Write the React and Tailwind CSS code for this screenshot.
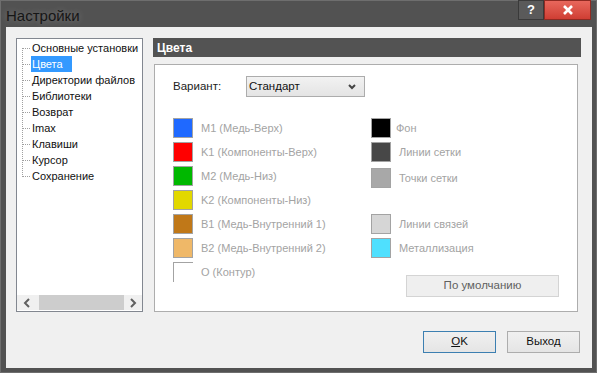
import React from 'react';

const leftColors = [
  { color: 'bg-[#1f69ff]', label: 'M1 (Медь-Верх)' },
  { color: 'bg-[#ff0000]', label: 'K1 (Компоненты-Верх)' },
  { color: 'bg-[#00b800]', label: 'M2 (Медь-Низ)' },
  { color: 'bg-[#e2d800]', label: 'K2 (Компоненты-Низ)' },
  { color: 'bg-[#c07818]', label: 'B1 (Медь-Внутренний 1)' },
  { color: 'bg-[#efb868]', label: 'B2 (Медь-Внутренний 2)' },
];

const treeItems = [
  'Основные установки',
  'Цвета',
  'Директории файлов',
  'Библиотеки',
  'Возврат',
  'Imax',
  'Клавиши',
  'Курсор',
  'Сохранение',
];

// dotted connector for one tree row
const Connector = ({ first, last }) => (
  <svg width="8" height="16" className="shrink-0">
    <line
      x1="0.5"
      x2="0.5"
      y1={first ? 8 : 0}
      y2={last ? 9 : 16}
      stroke="#a0a0a0"
      strokeDasharray="1 1"
    />
    <line x1="1" x2="8" y1="8.5" y2="8.5" stroke="#a0a0a0" strokeDasharray="1 1" />
  </svg>
);

const Swatch = ({ color, label, labelClass = 'ml-[8px]' }) => (
  <div className="flex items-center h-[24px]">
    <div className={`w-[20px] h-[20px] border border-[#a3a3a3] ${color}`} />
    <span className={`${labelClass} text-[#a3a3a3]`}>{label}</span>
  </div>
);

const Chevron = ({ dir }) => (
  <svg width="8" height="10" viewBox="0 0 8 10">
    <polyline
      points={dir === 'left' ? '6,1 2,5 6,9' : '2,1 6,5 2,9'}
      fill="none"
      stroke="#606060"
      strokeWidth="2"
    />
  </svg>
);

const App = () => {
  return (
    <div
      className="w-[597px] h-[373px] bg-[#525252] border border-[#6e6e6e] flex flex-col text-[11px] text-[#111]"
      style={{ fontFamily: '"Liberation Sans", Arial, sans-serif' }}
    >
      {/* Title bar */}
      <div className="h-[26px] flex items-start shrink-0">
        <div className="pl-[5px] pt-[4px] text-[15px] text-[#161616] [text-shadow:0_0_6px_rgba(255,255,255,0.25)]">
          Настройки
        </div>
        <div className="ml-auto mr-[5px] -mt-px flex">
          <div className="w-[26px] h-[20px] bg-[#5a5a5a] border border-[#3a3a3a] flex items-center justify-center text-white font-bold text-[13px]">
            ?
          </div>
          <div className="w-[47px] h-[20px] bg-gradient-to-b from-[#e8675c] to-[#cf3d33] border border-[#8e2a22] flex items-center justify-center">
            <svg width="12" height="10" viewBox="0 0 12 10">
              <path d="M2 1 L10 9 M10 1 L2 9" stroke="#fff" strokeWidth="2.6" />
            </svg>
          </div>
        </div>
      </div>

      {/* Client area */}
      <div className="flex-1 ml-[5px] mr-[4px] mb-[4px] bg-[#f0f0f0] flex flex-col pt-[11px]">
        <div className="flex pl-[10px] gap-[10px]">
          {/* Tree */}
          <div className="w-[127px] h-[274px] bg-white border border-[#828790] flex flex-col overflow-hidden text-[11px]">
            <div className="flex flex-col pl-[5px] pt-px">
              {treeItems.map((item, i) => (
                <div key={item} className="flex items-center h-[16px]">
                  <Connector first={i === 0} last={i === treeItems.length - 1} />
                  <span
                    className={`px-px ml-px leading-[16px] whitespace-nowrap ${
                      item === 'Цвета' ? 'bg-[#3399ff] text-white pr-[9px]' : ''
                    }`}
                  >
                    {item}
                  </span>
                </div>
              ))}
            </div>
            <div className="mt-auto mb-px h-[15px] flex bg-[#f0f0f0]">
              <div className="w-[22px] flex items-center justify-center pr-[3px]">
                <Chevron dir="left" />
              </div>
              <div className="w-[85px] bg-[#cdcdcd]" />
              <div className="flex-1 flex items-center justify-center">
                <Chevron dir="right" />
              </div>
            </div>
          </div>

          {/* Right panel */}
          <div className="w-[428px] flex flex-col">
            <div className="h-[19px] bg-[#535353] text-white font-bold text-[12px] pl-[4px] flex items-center">
              Цвета
            </div>
            <div className="mt-[7px] ml-px w-[424px] h-[248px] bg-white border border-[#adadad] flex flex-col">
              <div className="flex items-center mt-[11px] pl-[18px] text-[11.5px]">
                <span className="w-[73px] text-[#222]">Вариант:</span>
                <div className="w-[119px] h-[21px] border border-[#acacac] bg-gradient-to-b from-[#f2f2f2] to-[#e4e4e4] flex items-center pl-[2px] pr-[8px]">
                  <span>Стандарт</span>
                  <svg width="8" height="6" viewBox="0 0 8 6" className="ml-auto">
                    <polyline points="1,1 4,4 7,1" fill="none" stroke="#444" strokeWidth="2" />
                  </svg>
                </div>
              </div>

              <div className="flex mt-[19px] pl-[18px]">
                <div className="w-[198px] flex flex-col">
                  {leftColors.map((c) => (
                    <Swatch key={c.label} color={c.color} label={c.label} />
                  ))}
                  <div className="flex items-start h-[24px] pt-[2px]">
                    <div className="w-[20px] h-[20px] border-t border-l border-[#a3a3a3] bg-white" />
                    <span className="ml-[8px] mt-[2px] text-[#a3a3a3]">O (Контур)</span>
                  </div>
                </div>
                <div className="flex flex-col">
                  <Swatch color="bg-black" label="Фон" labelClass="ml-[5px]" />
                  <Swatch color="bg-[#474747]" label="Линии сетки" />
                  <div className="mt-[2px]">
                    <Swatch color="bg-[#a8a8a8]" label="Точки сетки" />
                  </div>
                  <div className="mt-[22px]">
                    <Swatch color="bg-[#d6d6d6]" label="Линии связей" />
                  </div>
                  <Swatch color="bg-[#4fe0fe]" label="Металлизация" />
                  <div className="ml-[35px] mt-[15px] w-[153px] h-[22px] bg-[#efefef] border border-[#d4d4d4] flex items-center justify-center text-[#606060] text-[11.5px]">
                    По умолчанию
                  </div>
                </div>
              </div>
            </div>
          </div>
        </div>

        {/* Dialog buttons */}
        <div className="flex justify-end gap-[11px] pr-[12px] mt-[19px] text-[11.5px]">
          <div className="w-[73px] h-[22px] border border-[#3c7fb1] bg-gradient-to-b from-[#f0f0f0] to-[#e5e5e5] flex items-center justify-center">
            <span>
              <span className="underline">O</span>K
            </span>
          </div>
          <div className="w-[73px] h-[22px] border border-[#adadad] bg-gradient-to-b from-[#f0f0f0] to-[#e5e5e5] flex items-center justify-center">
            Выход
          </div>
        </div>
      </div>
    </div>
  );
};

export default App;
